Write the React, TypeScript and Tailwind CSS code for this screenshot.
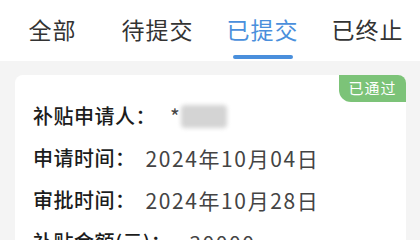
import React from 'react'

const tabs = ['全部', '待提交', '已提交', '已终止']

const rows = [
  { label: '申请时间：', value: '2024年10月04日', gap: 'ml-[10px]' },
  { label: '审批时间：', value: '2024年10月28日', gap: 'ml-[10px]' },
  { label: '补贴金额(元)：', value: '30000', gap: 'ml-[18px]' },
]

export default function App() {
  return (
    <div
      className="w-[420px] h-[240px] overflow-hidden bg-[#f4f4f4]"
      style={{ fontFamily: '"Noto Sans CJK SC", "Noto Sans", sans-serif' }}
    >
      {/* Tabs */}
      <div className="grid h-[61px] grid-cols-4 bg-white">
        {tabs.map((t, i) => (
          <div key={t} className="relative flex items-center justify-center">
            <span
              className={`pb-[2px] text-[23px] leading-none tracking-[1px] ${
                i === 2 ? 'text-[#4a8fdc]' : 'text-[#333333]'
              }`}
            >
              {t}
            </span>
            {i === 2 && (
              <div className="absolute bottom-[2px] left-1/2 h-[4px] w-[60px] -translate-x-1/2 rounded-full bg-[#4a8fdc]" />
            )}
          </div>
        ))}
      </div>

      {/* Card */}
      <div className="pl-[15px] pr-[14px] pt-[14px]">
        <div className="relative rounded-lg bg-white pl-[18px] pt-[29px] pb-4">
          <div className="absolute right-0 top-0 flex h-[27px] w-[67px] items-center justify-center rounded-bl-[12px] rounded-tr-lg bg-[#7cc378] text-[15px] tracking-[1px] text-white">
            已通过
          </div>

          <div className="flex h-[42px] items-start text-[20px] leading-[24px]">
            <span className="font-medium tracking-[0.5px] text-[#1c1c1c]">补贴申请人：</span>
            <span className="ml-[14px] text-[21px] text-[#444444]">*</span>
            <span className="ml-[1px] mt-[1px] h-[23px] w-[46px] rounded-sm bg-[#d4d4d4] blur-[2px]" />
          </div>

          {rows.map((r) => (
            <div key={r.label} className="flex h-[42px] items-start text-[20px] leading-[24px]">
              <span className="font-medium tracking-[0.5px] text-[#1c1c1c]">{r.label}</span>
              <span className={`${r.gap} text-[21px] tracking-[1.6px] text-[#444444]`}>{r.value}</span>
            </div>
          ))}
        </div>
      </div>
    </div>
  )
}
